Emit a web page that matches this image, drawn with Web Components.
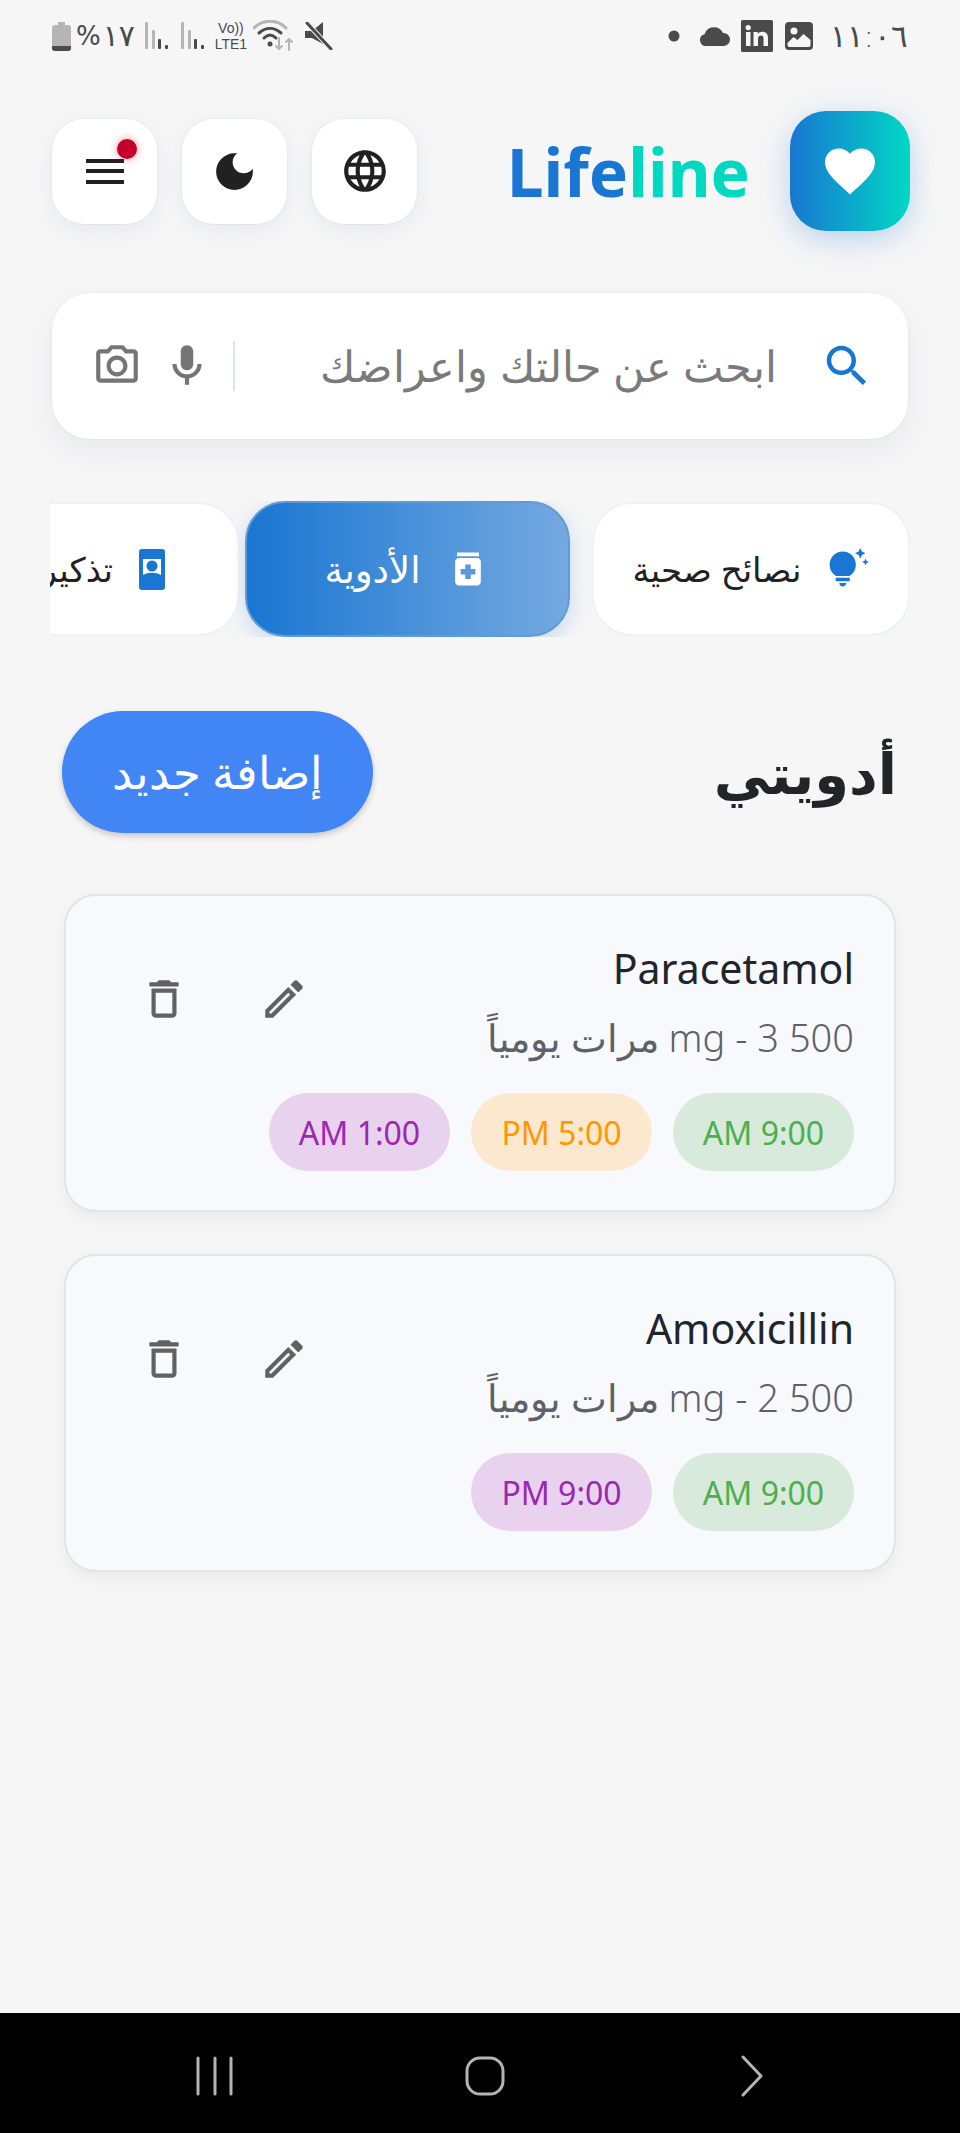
<!DOCTYPE html>
<html lang="ar" dir="rtl">
<head>
<meta charset="utf-8">
<title>Lifeline</title>
<style>
  html, body { margin: 0; padding: 0; }
  body { background: #f6f6f7; font-family: "Noto Sans", "DejaVu Sans", sans-serif; }
</style>
</head>
<body>
<lifeline-app>
  <status-bar slot="status"></status-bar>
  <app-header slot="header"></app-header>
  <search-bar slot="search" placeholder="ابحث عن حالتك واعراضك"></search-bar>
  <tab-strip slot="tabs">
    <tab-pill icon="tips" width="318" size="34">نصائح صحية</tab-pill>
    <tab-pill icon="medication" width="325" size="37" active>الأدوية</tab-pill>
    <tab-pill icon="reminder" width="314" size="34">تذكيرات</tab-pill>
  </tab-strip>
  <section-head slot="head" action="إضافة جديد">أدويتي</section-head>
  <med-card slot="cards" name="Paracetamol" dose="500 3 - mg مرات يومياً">
    <time-chip tone="green">9:00 AM</time-chip>
    <time-chip tone="orange">5:00 PM</time-chip>
    <time-chip tone="purple">1:00 AM</time-chip>
  </med-card>
  <med-card slot="cards" name="Amoxicillin" dose="500 2 - mg مرات يومياً">
    <time-chip tone="green">9:00 AM</time-chip>
    <time-chip tone="purple">9:00 PM</time-chip>
  </med-card>
  <nav-bar slot="nav"></nav-bar>
</lifeline-app>

<script>
const ICONS = {
  moon: 'M12 3c-4.97 0-9 4.03-9 9s4.03 9 9 9 9-4.03 9-9c0-.46-.04-.92-.1-1.36-.98 1.37-2.58 2.26-4.4 2.26-2.98 0-5.4-2.42-5.4-5.4 0-1.81.89-3.42 2.26-4.4-.44-.06-.9-.1-1.36-.1z',
  globe: 'M11.99 2C6.47 2 2 6.48 2 12s4.47 10 9.99 10C17.52 22 22 17.52 22 12S17.52 2 11.99 2zm6.93 6h-2.95c-.32-1.25-.78-2.45-1.38-3.56 1.84.63 3.37 1.91 4.33 3.56zM12 4.04c.83 1.2 1.48 2.53 1.91 3.96h-3.82c.43-1.43 1.08-2.76 1.91-3.96zM4.26 14C4.1 13.36 4 12.69 4 12s.1-1.36.26-2h3.38c-.08.66-.14 1.32-.14 2s.06 1.34.14 2H4.26zm.82 2h2.95c.32 1.25.78 2.45 1.38 3.56-1.84-.63-3.37-1.9-4.33-3.56zm2.95-8H5.08c.96-1.66 2.49-2.93 4.33-3.56C8.81 5.55 8.35 6.75 8.03 8zM12 19.96c-.83-1.2-1.48-2.53-1.91-3.96h3.82c-.43 1.43-1.08 2.76-1.91 3.96zM14.34 14H9.66c-.09-.66-.16-1.32-.16-2s.07-1.35.16-2h4.68c.09.65.16 1.32.16 2s-.07 1.34-.16 2zm.25 5.56c.6-1.11 1.06-2.31 1.38-3.56h2.95c-.96 1.65-2.49 2.93-4.33 3.56zM16.36 14c.08-.66.14-1.32.14-2s-.06-1.34-.14-2h3.38c.16.64.26 1.31.26 2s-.1 1.36-.26 2h-3.38z',
  heart: 'M12 21.35l-1.45-1.32C5.4 15.36 2 12.28 2 8.5 2 5.42 4.42 3 7.5 3c1.74 0 3.41.81 4.5 2.09C13.09 3.81 14.76 3 16.5 3 19.58 3 22 5.42 22 8.5c0 3.78-3.4 6.86-8.55 11.54L12 21.35z',
  search: 'M15.5 14h-.79l-.28-.27C15.41 12.59 16 11.11 16 9.5 16 5.91 13.09 3 9.5 3S3 5.91 3 9.5 5.91 16 9.5 16c1.61 0 3.09-.59 4.23-1.57l.27.28v.79l5 4.99L20.49 19l-4.99-5zm-6 0C7.01 14 5 11.99 5 9.5S7.01 5 9.5 5 14 7.01 14 9.5 11.99 14 9.5 14z',
  mic: 'M12 14c1.66 0 3-1.34 3-3V5c0-1.66-1.34-3-3-3S9 3.34 9 5v6c0 1.66 1.34 3 3 3zM17 11c0 2.76-2.24 5-5 5s-5-2.24-5-5H5c0 3.53 2.61 6.43 6 6.92V21h2v-3.08c3.39-.49 6-3.39 6-6.92h-2z',
  camera: 'M20 4h-3.17L15 2H9L7.17 4H4c-1.1 0-2 .9-2 2v12c0 1.1.9 2 2 2h16c1.1 0 2-.9 2-2V6c0-1.1-.9-2-2-2zm0 14H4V6h4.05l1.83-2h4.24l1.83 2H20v12zM12 7c-2.76 0-5 2.24-5 5s2.24 5 5 5 5-2.24 5-5-2.24-5-5-5zm0 8c-1.65 0-3-1.35-3-3s1.35-3 3-3 3 1.35 3 3-1.35 3-3 3z',
  tips: 'M7 20h4c0 1.1-.9 2-2 2s-2-.9-2-2zm-2-1h8v-2H5v2zm11.5-9.5c0 3.82-2.66 5.86-3.77 6.5H5.27C4.16 15.36 1.5 13.32 1.5 9.5 1.5 5.36 4.86 2 9 2s7.5 3.36 7.5 7.5zm4.87-2.13L20 8l1.37.63L22 10l.63-1.37L24 8l-1.37-.63L22 6l-.63 1.37zM19 6l.94-2.06L22 3l-2.06-.94L19 0l-.94 2.06L16 3l2.06.94L19 6z',
  medication: 'M6 3h12v2H6zm11 3H7c-1.1 0-2 .9-2 2v11c0 1.1.9 2 2 2h10c1.1 0 2-.9 2-2V8c0-1.1-.9-2-2-2zm-1 9h-2.5v2.5h-3V15H8v-3h2.5V9.5h3V12H16v3z',
  trash: 'M6 19c0 1.1.9 2 2 2h8c1.1 0 2-.9 2-2V7H6v12zM8 9h8v10H8V9zm7.5-5l-1-1h-5l-1 1H5v2h14V4h-3.5z',
  edit: 'M14.06 9.02l.92.92L5.92 19H5v-.92l9.06-9.06M17.66 3c-.25 0-.51.1-.7.29l-1.83 1.83 3.75 3.75 1.83-1.83c.39-.39.39-1.02 0-1.41l-2.34-2.34c-.2-.2-.45-.29-.71-.29zm-3.6 3.19L3 17.25V21h3.75L17.81 9.94l-3.75-3.75z'
};

const svgIcon = (name, size, color) =>
  `<svg width="${size}" height="${size}" viewBox="0 0 24 24" fill="${color}" style="display:block;flex:none"><path d="${ICONS[name]}"/></svg>`;

class LifelineApp extends HTMLElement {
  constructor() {
    super();
    this.attachShadow({ mode: 'open' });
    this.shadowRoot.innerHTML = `
      <style>
        :host { display: flex; flex-direction: column; width: 960px; height: 2133px; overflow: hidden; }
        main { flex: 1; display: flex; flex-direction: column; }
        .cards { display: flex; flex-direction: column; gap: 42px; margin: 61px 64px 0 64px; }
      </style>
      <slot name="status"></slot>
      <main>
        <slot name="header"></slot>
        <slot name="search"></slot>
        <slot name="tabs"></slot>
        <slot name="head"></slot>
        <div class="cards"><slot name="cards"></slot></div>
      </main>
      <slot name="nav"></slot>`;
  }
}

class StatusBar extends HTMLElement {
  constructor() {
    super();
    this.attachShadow({ mode: 'open' });
    const bars = `<svg width="24" height="28" viewBox="0 0 24 28"><rect x="1" y="0" width="3" height="27" rx="1" fill="#b5b5b5"/><rect x="8" y="8" width="3" height="19" rx="1" fill="#b5b5b5"/><rect x="14" y="17" width="3" height="10" rx="1" fill="#4a4a4a"/><rect x="21" y="23" width="3" height="4" rx="1" fill="#4a4a4a"/></svg>`;
    this.shadowRoot.innerHTML = `
      <style>
        :host { display: flex; direction: ltr; justify-content: space-between; align-items: center; height: 72px; padding: 0 52px; box-sizing: border-box; color: #4a4a4a; font-family: "DejaVu Sans", sans-serif; }
        .side { display: flex; align-items: center; }
        .num { font-size: 30px; line-height: 36px; }
        .pct { font-size: 26px; margin-left: 5px; }
        .lte { font: 400 14px/16px "Liberation Sans", sans-serif; text-align: center; width: 36px; margin: 0 4px 0 9px; }
        .time { font-size: 31px; line-height: 36px; margin-left: 17px; font-weight: 300; }
      </style>
      <div class="side">
        <svg width="19" height="29" viewBox="0 0 19 29"><path d="M6 0h7v3h3a3 3 0 0 1 3 3v20a3 3 0 0 1-3 3H3a3 3 0 0 1-3-3V6a3 3 0 0 1 3-3h3z" fill="#b5b5b5"/><path d="M0 24h19v2a3 3 0 0 1-3 3H3a3 3 0 0 1-3-3z" fill="#4a4a4a"/></svg>
        <span class="num pct">%</span>
        <span class="num" style="margin:0 9px 0 2px">١٧</span>
        ${bars}
        <span style="width:12px"></span>
        ${bars}
        <div class="lte"><div>Vo))</div><div>LTE1</div></div>
        <svg width="42" height="32" viewBox="0 0 42 32" fill="none" stroke-linecap="round"><path d="M1 8C10-1 24-1 33 8" stroke="#b5b5b5" stroke-width="3"/><path d="M6 13C13 7 21 7 28 13" stroke="#4a4a4a" stroke-width="3"/><path d="M11 18C15 14 19 14 23 18" stroke="#4a4a4a" stroke-width="3"/><circle cx="17" cy="24" r="2.5" fill="#4a4a4a"/><path d="M26 18v11M23 26l3 3 3-3" stroke="#b5b5b5" stroke-width="2"/><path d="M36 30V19M33 22l3-3 3 3" stroke="#b5b5b5" stroke-width="2"/></svg>
        <svg width="28" height="28" viewBox="0 0 28 28" style="margin-left:10px"><path d="M0 9h7l11-9v22l-11-6H0z" fill="#4a4a4a"/><path d="M2 1l24 26" stroke="#f6f6f7" stroke-width="5"/><path d="M2 1l24 26" stroke="#4a4a4a" stroke-width="3" stroke-linecap="round"/></svg>
      </div>
      <div class="side">
        <svg width="12" height="12" viewBox="0 0 12 12"><circle cx="6" cy="6" r="5.5" fill="#4a4a4a"/></svg>
        <svg width="32" height="19" viewBox="0 0 32 19" style="margin-left:19px"><path d="M7 19a6 6 0 0 1-1.5-11.8A10 10 0 0 1 24 6a6.5 6.5 0 0 1 1 13z" fill="#4a4a4a"/></svg>
        <svg width="32" height="32" viewBox="0 0 32 32" style="margin-left:10px"><rect width="32" height="32" rx="1.5" fill="#4a4a4a"/><rect x="5" y="12" width="4.5" height="14" fill="#f6f6f7"/><circle cx="7.2" cy="7.6" r="2.6" fill="#f6f6f7"/><path d="M12.5 12h4.3v2c1-1.500 2.600-2.300 4.600-2.300 3.800 0 5.600 2.300 5.600 6.300v8h-4.500v-7.500c0-2-.7-3-2.400-3-1.800 0-3.100 1.200-3.100 3.200V26h-4.500z" fill="#f6f6f7"/></svg>
        <svg width="28" height="28" viewBox="0 0 28 28" style="margin-left:12px"><rect width="28" height="28" rx="4" fill="#4a4a4a"/><circle cx="9" cy="9" r="3.500" fill="#f6f6f7"/><path d="M2.500 21l6-6 4 3 6-6 7 6v5a2 2 0 0 1-2 2H4.500a2 2 0 0 1-2-2z" fill="#f6f6f7"/></svg>
        <span class="time">١١:٠٦</span>
      </div>`;
  }
}

class IconButton extends HTMLElement {
  constructor() {
    super();
    this.attachShadow({ mode: 'open' });
    this.shadowRoot.innerHTML = `
      <style>
        :host { display: flex; position: relative; align-items: center; justify-content: center; width: 105px; height: 105px; border-radius: 32px; background: #fff; box-shadow: 0 6px 20px rgba(25, 60, 110, .07), 0 0 0 1px rgba(25, 118, 210, .04); }
      </style>
      <slot></slot>`;
  }
}

class AppHeader extends HTMLElement {
  constructor() {
    super();
    this.attachShadow({ mode: 'open' });
    this.shadowRoot.innerHTML = `
      <style>
        :host { display: flex; align-items: center; justify-content: space-between; margin-top: 39px; padding: 0 50px 0 52px; }
        .brand { display: flex; align-items: center; gap: 40px; }
        .logo { width: 120px; height: 120px; border-radius: 36px; display: flex; align-items: center; justify-content: center; background: linear-gradient(to right, #1976d2, #00d8c4); box-shadow: 0 8px 30px rgba(25, 118, 210, .28); }
        .title { direction: ltr; font: 700 66px/80px "Noto Sans", sans-serif; color: #1976d2; }
        .title b { font-weight: 700; color: #00d9c0; }
        .tools { display: flex; direction: ltr; gap: 25px; }
        .bars { display: flex; flex-direction: column; gap: 6.500px; width: 38px; }
        .bars i { display: block; height: 4px; background: #212121; }
        .dot { position: absolute; left: 65px; top: 20px; width: 20px; height: 20px; border-radius: 50%; background: #c4002b; box-shadow: 0 0 8px rgba(220, 0, 40, .45); }
      </style>
      <div class="brand">
        <div class="logo">${svgIcon('heart', 60, '#fff')}</div>
        <div class="title">Life<b>line</b></div>
      </div>
      <div class="tools">
        <icon-button><div class="bars"><i></i><i></i><i></i></div><span class="dot"></span></icon-button>
        <icon-button>${svgIcon('moon', 49, '#212121')}</icon-button>
        <icon-button>${svgIcon('globe', 50, '#212121')}</icon-button>
      </div>`;
  }
}

class SearchBar extends HTMLElement {
  constructor() {
    super();
    this.attachShadow({ mode: 'open' });
    this.shadowRoot.innerHTML = `
      <style>
        :host { display: flex; align-items: center; height: 146px; margin: 62px 52px 0 52px; padding: 0 34px 0 40px; border-radius: 38px; background: #fff; box-shadow: 0 12px 30px rgba(20, 40, 70, .06), 0 0 0 1px rgba(25, 118, 210, .04); box-sizing: border-box; }
        .text { flex: 1; margin-right: 43px; font-size: 43px; line-height: 60px; color: #7a7a7a; font-weight: 300; white-space: nowrap; }
        .line { width: 2px; height: 50px; background: #d7e5f2; margin: 0 21px 0 21px; }
      </style>
      ${svgIcon('search', 54, '#1976d2')}
      <div class="text">${this.getAttribute('placeholder')}</div>
      <div class="line"></div>
      ${svgIcon('mic', 50, '#757575')}
      <span style="width:20px"></span>
      ${svgIcon('camera', 50, '#757575')}`;
  }
}

class TabStrip extends HTMLElement {
  constructor() {
    super();
    this.attachShadow({ mode: 'open' });
    this.shadowRoot.innerHTML = `
      <style>
        :host { display: flex; align-items: center; height: 136px; margin: 62px 50px 0 50px; overflow: hidden; }
      </style>
      <slot></slot>`;
  }
}

class TabPill extends HTMLElement {
  constructor() {
    super();
    this.attachShadow({ mode: 'open' });
    const icon = this.getAttribute('icon');
    const active = this.hasAttribute('active');
    let glyph = icon === 'reminder'
      ? `<svg width="26" height="41" viewBox="0 0 26 41" style="flex:none"><rect width="26" height="41" rx="3" fill="#1976d2"/><path d="M4 10h18v16c-5-3-13-3-18 0z" fill="#fff"/><circle cx="13" cy="17" r="5.500" fill="#1976d2"/></svg>`
      : svgIcon(icon, icon === 'tips' ? 42 : 44, active ? '#fff' : '#1976d2');
    this.shadowRoot.innerHTML = `
      <style>
        :host { flex: none; display: flex; align-items: center; justify-content: center; gap: 26px; width: ${this.getAttribute('width')}px; box-sizing: border-box; height: ${active ? 136 : 134}px; border-radius: 40px; font-size: ${this.getAttribute('size')}px; line-height: 44px; white-space: nowrap; color: ${active ? '#fff' : '#212121'}; background: ${active ? 'linear-gradient(to right, #1976d2, #75a9e0)' : '#fff'}; border: ${active ? '2px solid #5f9bd8' : '2px solid #eaf2fb'}; margin-left: ${active ? 6 : 0}px; margin-right: ${active ? 22 : 0}px; ${active ? 'box-shadow: 0 6px 22px rgba(25, 118, 210, .22);' : ''} }
      </style>
      ${glyph}
      <span><slot></slot></span>`;
  }
}

class SectionHead extends HTMLElement {
  constructor() {
    super();
    this.attachShadow({ mode: 'open' });
    this.shadowRoot.innerHTML = `
      <style>
        :host { display: flex; align-items: center; justify-content: space-between; margin: 74px 63px 0 62px; }
        h1 { margin: 0; font-size: 56px; font-weight: 700; line-height: 80px; color: #212529; }
        button { width: 311px; height: 122px; border: 0; border-radius: 61px; background: #4285f4; color: #fff; font: 300 45px/50px "Noto Sans", "DejaVu Sans", sans-serif; box-shadow: 0 3px 6px rgba(0, 0, 0, .2); }
      </style>
      <h1><slot></slot></h1>
      <button>${this.getAttribute('action')}</button>`;
  }
}

class MedCard extends HTMLElement {
  constructor() {
    super();
    this.attachShadow({ mode: 'open' });
    this.shadowRoot.innerHTML = `
      <style>
        :host { display: flex; justify-content: space-between; align-items: flex-start; height: 318px; padding: 40px 40px; box-sizing: border-box; border: 2px solid #e3e4e6; border-radius: 32px; background: #f8f9fd; box-shadow: 0 6px 16px rgba(0, 0, 0, .05); }
        .info { flex: 1; min-width: 0; }
        .name { font-size: 41px; line-height: 64px; color: #212529; }
        .dose { margin-top: 7px; font-size: 38px; line-height: 60px; color: #5c6268; font-weight: 300; white-space: nowrap; }
        .chips { display: flex; gap: 21px; margin-top: 26px; }
        .actions { display: flex; direction: ltr; gap: 70px; flex: none; margin-top: 38px; padding-left: 33px; }
      </style>
      <div class="info">
        <div class="name">${this.getAttribute('name')}</div>
        <div class="dose">${this.getAttribute('dose')}</div>
        <div class="chips"><slot></slot></div>
      </div>
      <div class="actions">
        ${svgIcon('trash', 50, '#616161')}
        ${svgIcon('edit', 50, '#616161')}
      </div>`;
  }
}

class TimeChip extends HTMLElement {
  constructor() {
    super();
    this.attachShadow({ mode: 'open' });
    const tones = {
      green: ['#d8eadb', '#4caf50'],
      orange: ['#fce8cf', '#ff9800'],
      purple: ['#e8d2ee', '#9c27b0']
    };
    const [bg, fg] = tones[this.getAttribute('tone')];
    this.shadowRoot.innerHTML = `
      <style>
        :host { flex: none; display: flex; align-items: center; justify-content: center; width: 181px; height: 78px; border-radius: 39px; background: ${bg}; color: ${fg}; font-size: 32px; white-space: nowrap; }
      </style>
      <slot></slot>`;
  }
}

class NavBar extends HTMLElement {
  constructor() {
    super();
    this.attachShadow({ mode: 'open' });
    this.shadowRoot.innerHTML = `
      <style>
        :host { display: flex; direction: ltr; align-items: center; justify-content: space-between; height: 120px; padding: 6px 196px 0 196px; background: #000; flex: none; box-sizing: border-box; }
      </style>
      <svg width="38" height="40" viewBox="0 0 38 40" fill="none" stroke="#b4b4b4" stroke-width="3" stroke-linecap="round"><path d="M2 2v36M19 2v36M35 2v36"/></svg>
      <svg width="40" height="40" viewBox="0 0 40 40" fill="none" stroke="#b4b4b4" stroke-width="3" style="margin-right:4px"><rect x="2" y="2" width="36" height="36" rx="13"/></svg>
      <svg width="24" height="42" viewBox="0 0 24 42" fill="none" stroke="#b4b4b4" stroke-width="3" stroke-linecap="round" stroke-linejoin="round"><path d="M3 2l18 19L3 40"/></svg>`;
  }
}

customElements.define('lifeline-app', LifelineApp);
customElements.define('status-bar', StatusBar);
customElements.define('icon-button', IconButton);
customElements.define('app-header', AppHeader);
customElements.define('search-bar', SearchBar);
customElements.define('tab-strip', TabStrip);
customElements.define('tab-pill', TabPill);
customElements.define('section-head', SectionHead);
customElements.define('med-card', MedCard);
customElements.define('time-chip', TimeChip);
customElements.define('nav-bar', NavBar);
</script>
</body>
</html>
